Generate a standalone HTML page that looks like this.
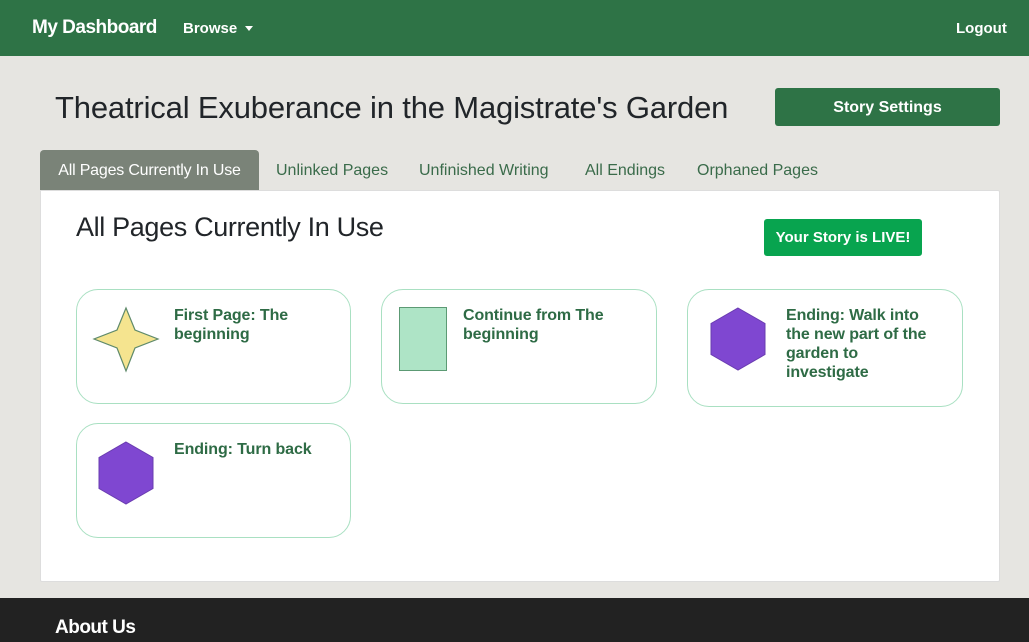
<!DOCTYPE html>
<html><head><style>
*{margin:0;padding:0;box-sizing:border-box}
body{width:1029px;height:642px;background:#e6e5e1;font-family:"Liberation Sans",sans-serif;position:relative;overflow:hidden}
.a{position:absolute;white-space:nowrap}
.nav{left:0;top:0;width:1029px;height:56px;background:#2e7346}
.card{position:absolute;background:#fff;border:1px solid #a9e0c2;border-radius:22px}
.ct{position:absolute;left:97px;top:16px;color:#2e6b45;font-size:16px;line-height:19px;font-weight:bold;letter-spacing:-0.1px}
.tab{top:162px;font-size:16px;color:#3a6b4a}
</style></head><body>
<div class="a nav"></div>
<div class="a" style="left:32px;top:17px;color:#fff;font-size:19px;font-weight:bold;letter-spacing:-0.5px">My Dashboard</div>
<div class="a" style="left:183px;top:20px;color:#fff;font-size:15px;font-weight:bold">Browse</div>
<div class="a" style="left:245px;top:26px;width:0;height:0;border-left:4.5px solid transparent;border-right:4.5px solid transparent;border-top:5px solid #fff"></div>
<div class="a" style="left:956px;top:20px;color:#fff;font-size:15px;font-weight:bold">Logout</div>
<div class="a" style="left:55px;top:90px;color:#212529;font-size:31px;letter-spacing:-0.17px">Theatrical Exuberance in the Magistrate's Garden</div>
<div class="a" style="left:775px;top:88px;width:225px;height:38px;background:#2e7346;border-radius:3px;color:#fff;font-size:16px;font-weight:bold;text-align:center;line-height:39px">Story Settings</div>
<div class="a" style="left:40px;top:150px;width:219px;height:40px;background:#7a8378;border-radius:4px 4px 0 0;color:#fff;font-size:16px;text-align:center;line-height:41px;letter-spacing:-0.2px">All Pages Currently In Use</div>
<div class="a tab" style="left:276px">Unlinked Pages</div>
<div class="a tab" style="left:419px">Unfinished Writing</div>
<div class="a tab" style="left:585px">All Endings</div>
<div class="a tab" style="left:697px">Orphaned Pages</div>
<div class="a" style="left:40px;top:190px;width:960px;height:392px;background:#fff;border:1px solid #ddd;border-radius:0 2px 2px 2px"></div>
<div class="a" style="left:76px;top:212px;color:#212529;font-size:27px;letter-spacing:-0.35px">All Pages Currently In Use</div>
<div class="a" style="left:764px;top:219px;width:158px;height:37px;background:#08a44f;border-radius:3px;color:#fff;font-size:15px;font-weight:bold;text-align:center;line-height:38px">Your Story is LIVE!</div>

<div class="card" style="left:76px;top:289px;width:275px;height:115px">
<svg class="a" style="left:0;top:0" width="100" height="110"><polygon points="49,18 58,40 81,49 58,58 49,81 40,58 17,49 40,40" fill="#f5e48f" stroke="#5f8a6a" stroke-width="1.2"/></svg>
<div class="ct">First Page: The<br>beginning</div></div>

<div class="card" style="left:381px;top:289px;width:276px;height:115px">
<svg class="a" style="left:0;top:0" width="100" height="110"><rect x="17.5" y="17.5" width="47" height="63" fill="#aee4c6" stroke="#5c9a74"/></svg>
<div class="ct" style="left:81px">Continue from The<br>beginning</div></div>

<div class="card" style="left:687px;top:289px;width:276px;height:118px">
<svg class="a" style="left:0;top:0" width="100" height="110"><polygon points="50,18 77,33.5 77,64.5 50,80 23,64.5 23,33.5" fill="#7f47d1" stroke="#6a3cb0"/></svg>
<div class="ct" style="left:98px">Ending: Walk into<br>the new part of the<br>garden to<br>investigate</div></div>

<div class="card" style="left:76px;top:423px;width:275px;height:115px">
<svg class="a" style="left:0;top:0" width="100" height="110"><polygon points="49,18 76,33.5 76,64.5 49,80 22,64.5 22,33.5" fill="#7f47d1" stroke="#6a3cb0"/></svg>
<div class="ct">Ending: Turn back</div></div>

<div class="a" style="left:0;top:598px;width:1029px;height:44px;background:#222"></div>
<div class="a" style="left:55px;top:617px;color:#fff;font-size:19px;font-weight:bold;letter-spacing:-0.5px">About Us</div>
</body></html>
